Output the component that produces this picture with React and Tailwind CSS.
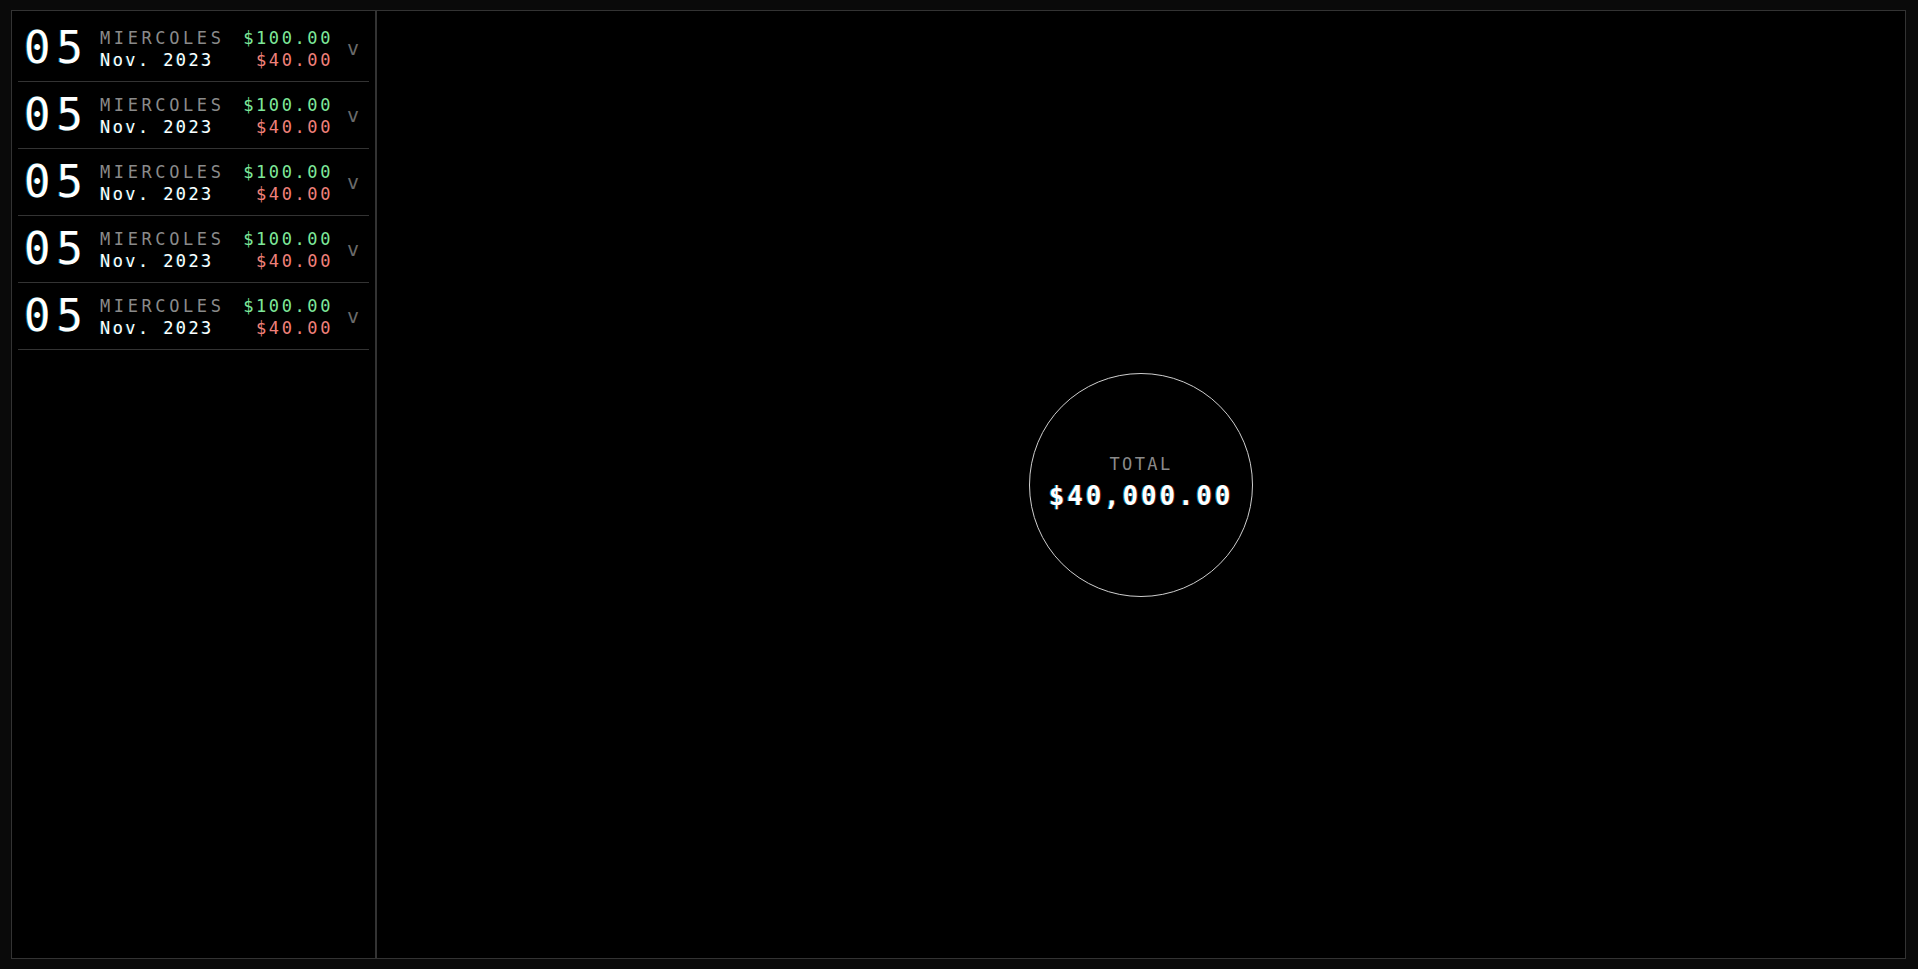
const rows = [0, 1, 2, 3, 4];

const font = { fontFamily: '"DejaVu Sans Mono", "Liberation Mono", monospace' };

function Row() {
  return (
    <div className="flex items-center h-[67px] border-b border-[#333] pl-[6px]">
      <div className="w-[76px] text-[44px] leading-none text-white tracking-[6px] [text-shadow:-1px_0_rgba(0,220,255,0.45)]">
        05
      </div>
      <div className="w-[233px] flex flex-col">
        <div className="flex justify-between items-baseline h-[22px]">
          <span className="text-[17px] tracking-[3.6px] text-[#8a8a8a]">MIERCOLES</span>
          <span className="text-[17px] tracking-[2.6px] text-[#7ee89a]">$100.00</span>
        </div>
        <div className="flex justify-between items-baseline h-[22px]">
          <span className="text-[17px] tracking-[2.4px] text-white [text-shadow:-1px_0_rgba(0,220,255,0.3)]">Nov. 2023</span>
          <span className="text-[17px] tracking-[2.6px] text-[#f0807a]">$40.00</span>
        </div>
      </div>
      <div className="flex-1 flex justify-center pl-[4px] text-[20px] leading-none text-[#6a6a6a]">v</div>
    </div>
  );
}

export default function App() {
  return (
    <div style={font} className="h-screen bg-[#0a0a0a] pt-[10px] pb-[10px] pl-[11px] pr-[12px]">
      <div className="flex h-full border border-[#333] bg-black">
        <div className="w-[365px] shrink-0 border-r-2 border-[#333] px-[6px] pt-[4px]">
          {rows.map((r) => (
            <Row key={r} />
          ))}
        </div>
        <div className="flex-1 flex items-center justify-center">
          <div className="w-[224px] h-[224px] rounded-full border border-[#cfcfcf] flex flex-col items-center justify-center">
            <div className="text-[17px] tracking-[2.4px] text-[#8a8a8a] leading-[22px] mt-[-5px]">TOTAL</div>
            <div className="text-[26px] font-bold tracking-[2.8px] text-white leading-[32px] mt-[5px] [text-shadow:-1px_0_rgba(0,220,255,0.6),1px_0_rgba(255,60,60,0.4)]">
              $40,000.00
            </div>
          </div>
        </div>
      </div>
    </div>
  );
}
